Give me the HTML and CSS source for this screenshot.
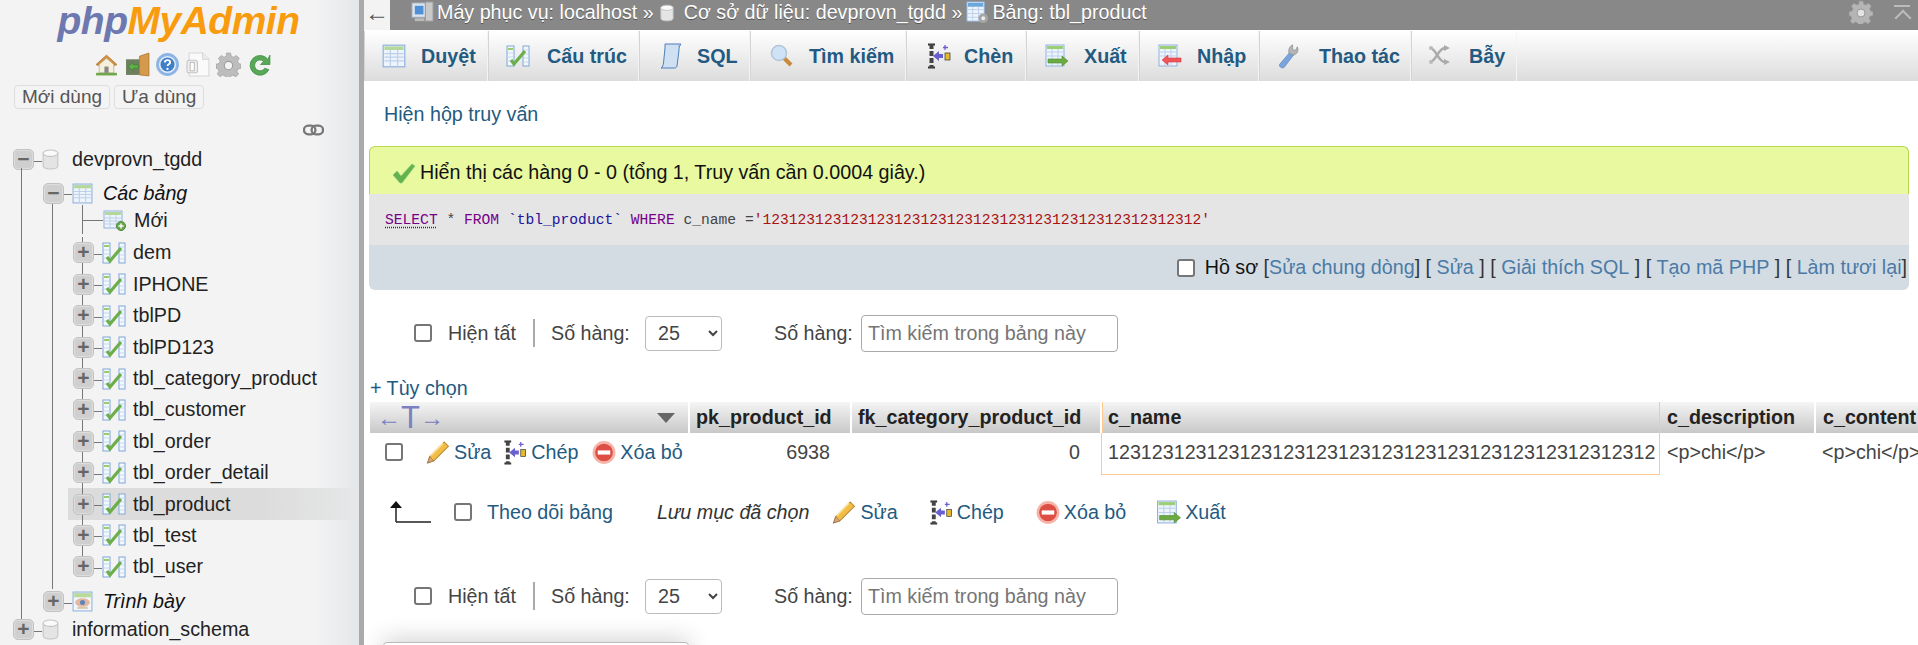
FILE: index.html
```html
<!DOCTYPE html>
<html lang="vi">
<head>
<meta charset="utf-8">
<title>phpMyAdmin</title>
<link rel="stylesheet" href="styles.css">
</head>
<body>
<svg class="defs" width="0" height="0">
  <defs>
    <symbol id="i-db" viewBox="0 0 16 20"><path d="M1 4v12c0 2 3 3 7 3s7-1 7-3V4z" fill="#e4e4e4" stroke="#c4c4c4"/><ellipse cx="8" cy="4" rx="7" ry="3" fill="#fafafa" stroke="#c4c4c4"/></symbol>
    <symbol id="i-table" viewBox="0 0 20 20"><rect x="1" y="1" width="18" height="18" fill="#eef4fb" stroke="#8fb2de"/><rect x="2" y="2" width="16" height="3" fill="#b4d89a"/><path d="M2 8h16M2 11h16M2 14h16M7 5v14M13 5v14" stroke="#bcd0ea"/></symbol>
    <symbol id="i-new" viewBox="0 0 24 22"><rect x="1" y="1" width="18" height="17" fill="#eef4fb" stroke="#8fb2de"/><rect x="2" y="2" width="16" height="3" fill="#b4d89a"/><path d="M2 8h16M2 11h16M2 14h16M7 5v13M13 5v13" stroke="#bcd0ea"/><circle cx="18" cy="16" r="4.500" fill="#6aa84f" stroke="#4d8a35"/><path d="M15.500 16h5M18 13.500v5" stroke="#fff" stroke-width="1.400"/></symbol>
    <symbol id="i-struct" viewBox="0 0 24 22"><rect x="1" y="1" width="7" height="20" fill="#f3f8fd" stroke="#7fa6da"/><rect x="17" y="1" width="6" height="20" fill="#f3f8fd" stroke="#7fa6da"/><path d="M2 4h5" stroke="#9acb6f" stroke-width="2"/><path d="M2 8h5M2 12h5M2 16h5M18 5h4M18 9h4M18 13h4M18 17h4" stroke="#c6d8ee"/><path d="M5 15l3 4L19 6" fill="none" stroke="#6cae4a" stroke-width="3.200"/></symbol>
    <symbol id="i-design" viewBox="0 0 20 20"><rect x="1" y="1" width="18" height="18" fill="#f2f6fb" stroke="#8fb2de"/><rect x="2" y="2" width="16" height="4" fill="#b9d99d"/><ellipse cx="10" cy="11" rx="7" ry="4" fill="#e4b7a0"/><circle cx="10" cy="11" r="2.400" fill="#5c84bd"/><rect x="5" y="15" width="10" height="2" fill="#d8c7a8"/></symbol>
    <symbol id="i-home" viewBox="0 0 24 24"><path d="M2 12 12 3l10 9-2 1-8-7-8 7z" fill="#d8913a" stroke="#a96a20" stroke-width=".7"/><path d="M5 12l7-6 7 6v8H5z" fill="#f5efdc" stroke="#b5a888" stroke-width=".7"/><rect x="10" y="14" width="4" height="6" fill="#888"/><rect x="2" y="20" width="20" height="2.500" fill="#6fa84a"/></symbol>
    <symbol id="i-door" viewBox="0 0 24 24"><rect x="1" y="7" width="13" height="15" fill="#6d7f5e"/><path d="M14 4l9-3v22l-9-1z" fill="#d59a4c" stroke="#a66f2b" stroke-width=".7"/><path d="M3 14l5-4v2.500h5v3H8V18z" fill="#5fb14a" stroke="#3d7e2d" stroke-width=".6"/></symbol>
    <symbol id="i-help" viewBox="0 0 24 24"><circle cx="12" cy="12" r="11" fill="#8db4e4"/><circle cx="12" cy="12" r="7.500" fill="#3f7fc8" stroke="#e5eefa" stroke-width="1.500"/><path d="M9.500 10c0-3 5-3 5 0 0 1.800-2.500 1.800-2.500 3.500" fill="none" stroke="#fff" stroke-width="1.800"/><circle cx="12" cy="16.200" r="1.100" fill="#fff"/></symbol>
    <symbol id="i-doc" viewBox="0 0 24 24"><path d="M3 1h13l6 6v16H3z" fill="#fafafa" stroke="#d6d6d6"/><path d="M16 1v6h6" fill="#eee" stroke="#d6d6d6"/><rect x="1" y="8" width="10" height="12" rx="2" fill="#efefef" stroke="#c4c4c4"/><rect x="4" y="10" width="4" height="8" fill="#fff" stroke="#bdbdbd"/></symbol>
    <symbol id="i-gear" viewBox="0 0 24 24"><path d="M10 1h4l.6 3 2.400 1 2.600-1.700 2.800 2.800L20.700 8.700l1 2.300 2.300.7v4l-2.900.5-1 2.400 1.600 2.500-2.800 2.800-2.600-1.700-2.300 1-.6 2.800h-4l-.6-2.900-2.300-1-2.600 1.700-2.800-2.800 1.700-2.500-1-2.400L0 15.700v-4l3-.7 1-2.300L2.300 6.100 5.100 3.300 7.700 5 10 4z" fill="#bdbdbd" stroke="#9c9c9c" stroke-width=".6"/><circle cx="12" cy="13" r="4" fill="#f3f3f3" stroke="#9c9c9c"/></symbol>
    <symbol id="i-reload" viewBox="0 0 24 24"><path d="M20 7A9.500 9.500 0 1 0 21 17l-4-1.500A5.200 5.200 0 1 1 16 9l-3 3h9V3z" fill="#59a857" stroke="#3b8d3e" stroke-width=".7"/></symbol>
    <symbol id="i-link" viewBox="0 0 22 12"><rect x="1" y="1.500" width="12" height="9" rx="4.500" fill="none" stroke="#777" stroke-width="2.400"/><rect x="9" y="1.500" width="12" height="9" rx="4.500" fill="none" stroke="#777" stroke-width="2.400"/></symbol>
    <symbol id="i-sql" viewBox="0 0 24 26"><path d="M6 1h16c-2 2-2 4-2 6l-2 16c-.5 2-2 2-3 2H2c2-1 2-3 2.500-5L6 5z" fill="#cfe0f3" stroke="#4f7fb8"/><path d="M19 1c2 0 3 1 3 2h-3z" fill="#8fb2de"/></symbol>
    <symbol id="i-search" viewBox="0 0 24 24"><path d="M14 14l7 7" stroke="#c98a3a" stroke-width="4"/><circle cx="9" cy="9" r="7.500" fill="#cfe3f7" stroke="#b3c5d9" stroke-width="1.500"/></symbol>
    <symbol id="i-insert" viewBox="0 0 24 26"><path d="M1 1.500h7M1 24.500h7" stroke="#333" stroke-width="2" fill="none"/><path d="M4.500 1v24" stroke="#444" stroke-width="4" stroke-dasharray="5 2"/><path d="M6 13l6-5v3h4v4h-4v3z" fill="#6a5fd0"/><rect x="18" y="10" width="5" height="7" fill="#e5b92b" stroke="#333" stroke-width=".7"/><path d="M18 2v5M16 4.500h5" stroke="#6a5fd0" stroke-width="1.300"/></symbol>
    <symbol id="i-export" viewBox="0 0 24 24"><rect x="1" y="1" width="18" height="21" fill="#eef4fb" stroke="#8fb2de"/><rect x="2" y="2" width="16" height="3" fill="#9ccf73"/><path d="M2 8h16M2 12h16M7 5v17M13 5v17" stroke="#bcd0ea"/><path d="M3 15h14v-3l6 5-6 5v-3H3z" fill="#6cab42" stroke="#4c8a2b" stroke-width=".6"/></symbol>
    <symbol id="i-import" viewBox="0 0 24 24"><rect x="1" y="1" width="18" height="21" fill="#eef4fb" stroke="#8fb2de"/><rect x="2" y="2" width="16" height="3" fill="#9ccf73"/><path d="M2 8h16M2 12h16M7 5v17M13 5v17" stroke="#bcd0ea"/><path d="M23 14H10v-3l-6 5 6 5v-3h13z" fill="#f0555a" stroke="#d63b3f" stroke-width=".6"/></symbol>
    <symbol id="i-wrench" viewBox="0 0 24 28"><path d="M14 10 3 23c-1 3 3 5 5 3l10-13z" fill="#7ba4dc" stroke="#5582bd" stroke-width=".7"/><path d="M13 11c-1-4 1-8 4-9v5l3 1 2-4c2 4 0 8-4 9z" fill="#b4b4b4" stroke="#8a8a8a" stroke-width=".7"/></symbol>
    <symbol id="i-trigger" viewBox="0 0 24 24"><path d="M2 4c6 0 8 14 15 14M2 18c6 0 8-14 15-14" fill="none" stroke="#aaa" stroke-width="2.500"/><path d="M16 1l6 3-6 3zM16 15l6 3-6 3z" fill="#aaa"/><circle cx="3" cy="4" r="2" fill="#bbb"/><circle cx="3" cy="18" r="2" fill="#bbb"/></symbol>
    <symbol id="i-pencil" viewBox="0 0 24 24"><path d="M18 2l4 4L8 20l-6 2 2-6z" fill="#f2bd45" stroke="#b8862a"/><path d="M4 16l4 4-6 2z" fill="#d9a77a" stroke="#8c6a46" stroke-width=".6"/><path d="M5 15 17 3" stroke="#fbe29a" stroke-width="1.500"/></symbol>
    <symbol id="i-del" viewBox="0 0 24 24"><circle cx="12" cy="12" r="11" fill="#f5b5aa"/><circle cx="12" cy="12" r="8.500" fill="#dd4f45"/><rect x="6" y="10" width="12" height="4" fill="#fff"/></symbol>
    <symbol id="i-check" viewBox="0 0 24 22"><path d="M1 13l4-4 4 5L20 2l3 2L10 21H8z" fill="#62b34d" stroke="#8dc97d" stroke-width=".7"/></symbol>
    <symbol id="i-server" viewBox="0 0 24 24"><rect x="1" y="2" width="14" height="15" fill="#dbe4ee" stroke="#9daab8"/><rect x="4" y="5" width="9" height="9" fill="#4f8fd6"/><rect x="15" y="1" width="8" height="20" fill="#c9c9c9" stroke="#9a9a9a"/><rect x="4" y="18" width="10" height="3" fill="#bbb"/></symbol>
    <symbol id="i-tbl2" viewBox="0 0 24 24"><rect x="1" y="1" width="18" height="20" fill="#eef4fb" stroke="#8fb2de"/><rect x="2" y="2" width="16" height="4" fill="#6ba6dc"/><path d="M2 9h16M2 13h16M2 17h16M7 6v15M13 6v15" stroke="#bcd0ea"/><circle cx="18" cy="18" r="5" fill="#a5a5a5"/><circle cx="18" cy="18" r="2" fill="#eee"/></symbol>
  </defs>
</svg>

<div class="app">
  <aside class="side">
    <div class="logo"><span class="logo-php">php</span><span class="logo-my">MyAdmin</span></div>
    <div class="quick">
      <svg class="qi"><use href="#i-home"/></svg>
      <svg class="qi"><use href="#i-door"/></svg>
      <svg class="qi"><use href="#i-help"/></svg>
      <svg class="qi"><use href="#i-doc"/></svg>
      <svg class="qi"><use href="#i-gear"/></svg>
      <svg class="qi"><use href="#i-reload"/></svg>
    </div>
    <div class="recent">
      <span class="chip">Mới dùng</span>
      <span class="chip">Ưa dùng</span>
    </div>
    <div class="linkrow"><svg class="link"><use href="#i-link"/></svg></div>
    <ul class="tree">
      <li class="row r-db r-first line-a"><span class="exp">−</span><span class="dash"></span><svg class="ic-db"><use href="#i-db"/></svg><span class="lbl-db">devprovn_tgdd</span></li>
      <li class="row r-group line-a line-b"><span class="exp">−</span><span class="dash"></span><svg class="ic-tb"><use href="#i-table"/></svg><span class="lbl-g">Các bảng</span></li>
      <li class="row r-new line-a line-b"><span class="vert"></span><span class="dash wide"></span><svg class="ic-st"><use href="#i-new"/></svg><span class="lbl-t">Mới</span></li>
      <li class="row r-t line-a line-b line-c"><span class="exp">+</span><span class="dash"></span><svg class="ic-st"><use href="#i-struct"/></svg><span class="lbl-t">dem</span></li>
      <li class="row r-t line-a line-b line-c"><span class="exp">+</span><span class="dash"></span><svg class="ic-st"><use href="#i-struct"/></svg><span class="lbl-t">IPHONE</span></li>
      <li class="row r-t line-a line-b line-c"><span class="exp">+</span><span class="dash"></span><svg class="ic-st"><use href="#i-struct"/></svg><span class="lbl-t">tblPD</span></li>
      <li class="row r-t line-a line-b line-c"><span class="exp">+</span><span class="dash"></span><svg class="ic-st"><use href="#i-struct"/></svg><span class="lbl-t">tblPD123</span></li>
      <li class="row r-t line-a line-b line-c"><span class="exp">+</span><span class="dash"></span><svg class="ic-st"><use href="#i-struct"/></svg><span class="lbl-t">tbl_category_product</span></li>
      <li class="row r-t line-a line-b line-c"><span class="exp">+</span><span class="dash"></span><svg class="ic-st"><use href="#i-struct"/></svg><span class="lbl-t">tbl_customer</span></li>
      <li class="row r-t line-a line-b line-c"><span class="exp">+</span><span class="dash"></span><svg class="ic-st"><use href="#i-struct"/></svg><span class="lbl-t">tbl_order</span></li>
      <li class="row r-t line-a line-b line-c"><span class="exp">+</span><span class="dash"></span><svg class="ic-st"><use href="#i-struct"/></svg><span class="lbl-t">tbl_order_detail</span></li>
      <li class="row r-t sel line-a line-c"><span class="exp">+</span><span class="dash"></span><svg class="ic-st"><use href="#i-struct"/></svg><span class="lbl-t">tbl_product</span></li>
      <li class="row r-t line-a line-b line-c"><span class="exp">+</span><span class="dash"></span><svg class="ic-st"><use href="#i-struct"/></svg><span class="lbl-t">tbl_test</span></li>
      <li class="row r-t line-a line-b line-c-end"><span class="exp">+</span><span class="dash"></span><svg class="ic-st"><use href="#i-struct"/></svg><span class="lbl-t">tbl_user</span></li>
      <li class="row r-group r-view line-a line-b-end"><span class="exp">+</span><span class="dash"></span><svg class="ic-tb"><use href="#i-design"/></svg><span class="lbl-g">Trình bày</span></li>
      <li class="row r-db r-last line-a-end"><span class="exp">+</span><span class="dash"></span><svg class="ic-db"><use href="#i-db"/></svg><span class="lbl-db">information_schema</span></li>
    </ul>
  </aside>
  <div class="splitter"></div>

  <main class="main">
    <div class="crumbs">
      <div class="back">←</div>
      <div class="trail">
        <svg class="ci ci-first"><use href="#i-server"/></svg><span>Máy phục vụ: localhost »</span>
        <svg class="ci ci-db"><use href="#i-db"/></svg><span>Cơ sở dữ liệu: devprovn_tgdd »</span>
        <svg class="ci ci-tb"><use href="#i-tbl2"/></svg><span>Bảng: tbl_product</span>
      </div>
      <svg class="gear"><use href="#i-gear"/></svg>
      <div class="collapse"></div>
    </div>

    <nav class="tabs">
      <a class="tab t1"><svg class="ti"><use href="#i-table"/></svg>Duyệt</a>
      <a class="tab t2"><svg class="ti"><use href="#i-struct"/></svg>Cấu trúc</a>
      <a class="tab t3"><svg class="ti"><use href="#i-sql"/></svg>SQL</a>
      <a class="tab t4"><svg class="ti"><use href="#i-search"/></svg>Tìm kiếm</a>
      <a class="tab t5"><svg class="ti"><use href="#i-insert"/></svg>Chèn</a>
      <a class="tab t6"><svg class="ti"><use href="#i-export"/></svg>Xuất</a>
      <a class="tab t7"><svg class="ti"><use href="#i-import"/></svg>Nhập</a>
      <a class="tab t8"><svg class="ti"><use href="#i-wrench"/></svg>Thao tác</a>
      <a class="tab t9"><svg class="ti"><use href="#i-trigger"/></svg>Bẫy</a>
    </nav>

    <div class="qbox-link">Hiện hộp truy vấn</div>

    <section class="result">
      <div class="msg"><svg class="ok"><use href="#i-check"/></svg>Hiển thị các hàng 0 - 0 (tổng 1, Truy vấn cần 0.0004 giây.)</div>
      <div class="sql"><code class="sql-line"><span class="kw-u">SELECT</span> <span class="op">*</span> <span class="kw">FROM</span> <span class="tick">`tbl_product`</span> <span class="kw">WHERE</span> <span class="col">c_name</span> <span class="op">=</span><span class="str">'12312312312312312312312312312312312312312312312312'</span></code></div>
      <div class="tools"><input type="checkbox" class="cb"><span class="prof">Hồ sơ</span> [<a>Sửa chung dòng</a>] [ <a>Sửa</a> ] [ <a>Giải thích SQL</a> ] [ <a>Tạo mã PHP</a> ] [ <a>Làm tươi lại</a>]</div>
    </section>

    <div class="filters f-top">
      <input type="checkbox" class="cb">
      <span class="f-all">Hiện tất</span>
      <span class="f-sep"></span>
      <span class="f-rows">Số hàng:</span>
      <select class="sel-rows"><option>25</option></select>
      <span class="f-rows2">Số hàng:</span>
      <input class="f-search" type="text" placeholder="Tìm kiếm trong bảng này">
    </div>

    <div class="opts">+ Tùy chọn</div>

    <table class="grid">
      <colgroup><col class="c1"><col class="c2"><col class="c3"><col class="c4"><col class="c5"><col class="c6"></colgroup>
      <thead>
        <tr>
          <th class="th-act"><span class="tarrows"><span class="ta">←</span><span class="tt">T</span><span class="ta">→</span></span><span class="tri"></span></th>
          <th class="th-l">pk_product_id</th>
          <th class="th-l">fk_category_product_id</th>
          <th class="th-l mark mark-h">c_name</th>
          <th>c_description</th>
          <th>c_content</th>
        </tr>
      </thead>
      <tbody>
        <tr>
          <td class="td-act">
            <div class="acts">
              <input type="checkbox" class="cb cb-row">
              <a class="act a-edit"><svg class="ai"><use href="#i-pencil"/></svg>Sửa</a>
              <a class="act a-copy"><svg class="ai"><use href="#i-insert"/></svg>Chép</a>
              <a class="act"><svg class="ai"><use href="#i-del"/></svg>Xóa bỏ</a>
            </div>
          </td>
          <td class="num">6938</td>
          <td class="num">0</td>
          <td class="mark mark-d">12312312312312312312312312312312312312312312312312</td>
          <td>&lt;p&gt;chi&lt;/p&gt;</td>
          <td>&lt;p&gt;chi&lt;/p&gt;</td>
        </tr>
      </tbody>
    </table>

    <div class="bulk">
      <svg class="up" viewBox="0 0 44 24"><path d="M8 22h35M8 22V6" stroke="#222" stroke-width="1.500" fill="none"/><path d="M2 8 8 1l6 7z" fill="#111"/></svg>
      <input type="checkbox" class="cb">
      <a class="b-all">Theo dõi bảng</a>
      <em class="b-save">Lưu mục đã chọn</em>
      <a class="b-act b-edit"><svg class="ai"><use href="#i-pencil"/></svg>Sửa</a>
      <a class="b-act b-copy"><svg class="ai"><use href="#i-insert"/></svg>Chép</a>
      <a class="b-act b-del"><svg class="ai"><use href="#i-del"/></svg>Xóa bỏ</a>
      <a class="b-act b-exp"><svg class="ai"><use href="#i-export"/></svg>Xuất</a>
    </div>

    <div class="filters f-bot">
      <input type="checkbox" class="cb">
      <span class="f-all">Hiện tất</span>
      <span class="f-sep"></span>
      <span class="f-rows">Số hàng:</span>
      <select class="sel-rows"><option>25</option></select>
      <span class="f-rows2">Số hàng:</span>
      <input class="f-search" type="text" placeholder="Tìm kiếm trong bảng này">
    </div>

    <div class="qbox-peek"></div>
  </main>
</div>
</body>
</html>
```
FILE: styles.css
```css
* { box-sizing: border-box; }
html, body { margin: 0; padding: 0; height: 645px; overflow: hidden; background: #fff; }
body { font-family: "Liberation Sans", Arial, sans-serif; font-size: 19.700px; color: #444; }
.defs { position: absolute; }
a { color: #235a81; text-decoration: none; }
ul { list-style: none; margin: 0; padding: 0; }

.app { display: flex; width: 1918px; height: 645px; overflow: hidden; }

/* navigation panel */
.side { width: 359px; flex: none; height: 645px; overflow: hidden; background: linear-gradient(to right, #f3f3f3 0, #f3f3f3 315px, #e4e7ea 359px); }
.splitter { width: 5px; flex: none; background: #aaa; }
.logo { height: 47px; text-align: center; font-weight: bold; font-style: italic; font-size: 39px; line-height: 42px; letter-spacing: -.5px; padding-right: 2px; }
.logo-php { color: #6c78af; }
.logo-my { color: #f89c0e; }
.quick { display: flex; height: 28px; margin-top: 5px; padding-left: 94px; gap: 5.500px; }
.qi { width: 25px; height: 25px; flex: none; }
.recent { display: flex; gap: 4px; padding-left: 14px; margin-top: 5px; }
.chip { height: 24px; line-height: 22px; padding: 0 7px; font-size: 19px; border: 1px solid #ddd; border-radius: 4px; color: #555; background: #f4f4f4; }
.linkrow { height: 18px; margin-top: 15px; padding-left: 303px; }
.link { width: 21px; height: 12px; display: block; }

.tree { margin-top: 2.300px; }
.row { position: relative; display: flex; align-items: center; height: 31.400px; color: #222; white-space: nowrap; }
.exp { flex: none; width: 21px; height: 21px; border-radius: 5px; background: #cfcfcf; border: 1px solid #c2c2c2; box-shadow: inset 0 0 0 1px #ddd; color: #666; font-weight: bold; font-size: 21px; line-height: 18px; text-align: center; position: relative; z-index: 1; }
.dash { flex: none; width: 8px; height: 1px; background: #777; margin-top: 3px; position: relative; z-index: 1; }
.dash.wide { width: 20px; margin-top: 0; }
.vert { flex: none; width: 1px; }
.ic-db { width: 17px; height: 21px; flex: none; }
.ic-tb { width: 21px; height: 21px; flex: none; }
.ic-st { width: 24px; height: 22px; flex: none; }
.lbl-db { margin-left: 13px; }
.lbl-g { margin-left: 10px; font-style: italic; color: #111; }
.lbl-t { margin-left: 7px; }

.r-db { padding-left: 13px; }
.r-group { padding-left: 43px; height: 33.600px; padding-top: 2px; }
.r-t { padding-left: 73px; }
.r-new { padding-left: 82px; height: 28px; padding-bottom: 4.600px; }
.r-view { height: 32px; padding-top: 6px; }
.r-last { height: 30.600px; }

.line-a::before, .line-a-end::before { content: ""; position: absolute; left: 21px; top: 0; bottom: 0; width: 1px; background: #777; z-index: 2; }
.line-a-end::before { bottom: auto; height: 4px; }
.r-first.line-a::before { top: 24px; }
.line-b { background-image: linear-gradient(#777, #777); background-repeat: no-repeat; background-size: 1px 100%; background-position: 52px 0; }
.r-group.line-b { background-size: 1px 10px; background-position: 52px 100%; }
.line-b-end { background-image: linear-gradient(#777, #777); background-repeat: no-repeat; background-size: 1px 6px; background-position: 52px 0; }
.line-c::after, .line-c-end::after { content: ""; position: absolute; left: 82px; top: 0; bottom: 0; width: 1px; background: #777; z-index: 0; }
.line-c-end::after { bottom: 10px; }
.r-new::after { content: ""; position: absolute; left: 82px; top: -4px; bottom: 3px; width: 1px; background: #777; }
.sel { background-image: linear-gradient(#777, #777), linear-gradient(to right, #f3f3f3 68px, #dcdcdc 68px, #dcdcdc 260px, #e6e7e8 100%); background-size: 1px 100%, 100% 100%; background-position: 52px 0, 0 0; background-repeat: no-repeat; }

/* main column */
.main { flex: 1; min-width: 0; height: 645px; overflow: hidden; position: relative; }
.crumbs { display: flex; align-items: center; height: 30px; background: #888; color: #fff; text-shadow: 0 1px 0 #555; }
.back { width: 26px; height: 30px; background: #f3f3f3; color: #555; text-align: center; font-size: 24px; line-height: 26px; text-shadow: none; flex: none; }
.trail { display: flex; align-items: center; gap: 6px; padding-left: 21px; flex: 1; height: 26px; margin-top: -5px; white-space: nowrap; }
.ci { width: 23px; height: 23px; flex: none; }
.ci-first { margin-right: -3px; }
.ci-db { width: 14px; height: 20px; margin-right: 4px; }
.ci-tb { margin-right: -3px; margin-left: -2px; }
.gear { width: 24px; height: 24px; flex: none; margin-right: 21px; margin-top: -6px; opacity: .85; }
.collapse { width: 16px; height: 16px; flex: none; margin-right: 8px; margin-top: -4px; border-top: 2px solid #bbb; position: relative; }
.collapse::after { content: ""; position: absolute; left: 3px; top: 5px; width: 10px; height: 10px; border-left: 2px solid #bbb; border-top: 2px solid #bbb; transform: rotate(45deg); }

.tabs { display: flex; height: 50px; margin-top: 1px; background: linear-gradient(#fff, #dcdcdc); }
.tab { display: flex; align-items: center; height: 50px; color: #235a81; font-weight: bold; border-right: 1px solid #f4f4f4; box-shadow: 1px 0 0 #d4d4d4 inset; flex: none; white-space: nowrap; }
.ti { width: 24px; height: 26px; flex: none; }
.t1 { width: 124px; padding-left: 18px; gap: 15px; }
.t2 { width: 151px; padding-left: 18px; gap: 17px; }
.t3 { width: 111px; padding-left: 20px; gap: 14px; }
.t4 { width: 156px; padding-left: 20px; gap: 15px; }
.t5 { width: 120px; padding-left: 21px; gap: 13px; }
.t6 { width: 113px; padding-left: 19px; gap: 15px; }
.t7 { width: 120px; padding-left: 19px; gap: 15px; }
.t8 { width: 152px; padding-left: 17px; gap: 19px; }
.t9 { width: 106px; padding-left: 17px; gap: 17px; }

.qbox-link { margin: 21px 0 0 20px; color: #235a81; height: 24px; line-height: 24px; }

.result { margin: 20px 9px 0 5px; }
.msg { display: flex; align-items: center; height: 48px; padding: 4px 0 0 22px; background: #e8f9a0; border: 1px solid #b5d84e; border-bottom: 0; border-radius: 6px 6px 0 0; color: #111; gap: 4px; }
.ok { width: 24px; height: 22px; flex: none; }
.sql { height: 51px; padding: 0 0 0 16px; display: flex; align-items: center; background: #e5e5e5; color: #444; }
.sql-line { white-space: pre; font-family: "Liberation Mono", monospace; font-size: 14.630px; }
.kw-u { color: #708; text-decoration: underline dotted #333; text-underline-offset: 3px; }
.kw { color: #708; }
.tick { color: #219; }
.op { color: #444; }
.col { color: #444; }
.str { color: #a11; }
.tools { height: 45px; display: flex; align-items: center; justify-content: flex-end; background: #d3dce3; border-radius: 0 0 6px 6px; color: #333; white-space: pre; padding-right: 2px; }
.tools a { color: #4b7aa6; }
.prof { color: #111; margin-left: 10px; }

.filters { display: flex; align-items: center; height: 36px; padding-left: 50px; color: #444; }
.f-top { margin-top: 25px; }
.f-bot { margin-top: 51px; }
.cb { width: 18px; height: 18px; margin: 0; flex: none; appearance: none; background: #fff; border: 2px solid #767676; border-radius: 3px; }
.f-all { margin-left: 16px; width: 67px; white-space: nowrap; }
.f-sep { width: 2px; height: 28px; background: #aaa; margin-left: 18px; }
.f-rows { margin-left: 16px; width: 78px; white-space: nowrap; }
.sel-rows { width: 77px; height: 35px; margin-left: 16px; padding-left: 8px; font: 19.700px "Liberation Sans", Arial, sans-serif; color: #444; background: #fff; border: 1px solid #bbb; border-radius: 4px; }
.f-rows2 { margin-left: 52px; width: 78px; white-space: nowrap; }
.f-search { width: 257px; height: 37px; margin-left: 9px; padding: 0 6px; font: 19.700px "Liberation Sans", Arial, sans-serif; color: #666; border: 1px solid #aaa; border-radius: 4px; }
.f-search::placeholder { color: #757575; opacity: 1; }

.opts { margin: 27px 0 0 6px; height: 20px; line-height: 20px; color: #235a81; }

.grid { border-collapse: collapse; table-layout: fixed; width: 1554px; margin: 4px 0 0 6px; }
.c1 { width: 319px; } .c2 { width: 162px; } .c3 { width: 250px; } .c4 { width: 559px; } .c5 { width: 155px; } .c6 { width: 109px; }
.grid th { height: 31px; padding: 0 7px; text-align: left; white-space: nowrap; overflow: hidden; color: #222; background: linear-gradient(#f5f5f5, #c8c8c8); border-right: 2px solid #fff; }
.grid th.th-l { padding-left: 6px; }
.grid td { height: 42px; padding: 0 7px 4px; white-space: nowrap; overflow: hidden; color: #444; }
.grid td.num { text-align: right; padding-right: 21px; }
.grid th.th-act { position: relative; padding: 0; }
.tarrows { display: inline-flex; align-items: center; height: 31px; color: #7a80c0; font-weight: normal; padding-left: 7px; }
.ta { font-size: 24px; line-height: 28px; }
.tt { font-size: 31px; line-height: 31px; }
.tri { position: absolute; right: 13px; top: 11px; width: 0; height: 0; border-left: 9px solid transparent; border-right: 9px solid transparent; border-top: 10px solid #666; }
.mark-h { box-shadow: inset 1px 0 0 #fdc991, inset -1px 0 0 #fdc991, 0 -1px 0 #f4f6f8, 0 -2px 0 #fdc991; }
.mark-d { box-shadow: inset 1px 0 0 #fdc991, inset -1px 0 0 #fdc991, inset 0 -1px 0 #fdc991; }
.grid th.mark { border-right: 0; }
.acts { display: flex; align-items: center; padding-left: 8px; }
.cb-row { margin-right: 22px; }
.act { display: inline-flex; align-items: center; gap: 3px; color: #235a81; }
.a-edit { margin-right: 11px; }
.a-copy { margin-right: 13px; }
.ai { width: 26px; height: 25px; flex: none; }

.bulk { display: flex; align-items: center; height: 30px; margin-top: 22px; padding-left: 24px; white-space: nowrap; color: #235a81; }
.up { width: 44px; height: 24px; flex: none; }
.bulk .cb { margin-left: 22px; }
.b-all { margin-left: 15px; }
.b-save { margin-left: 44px; color: #333; }
.b-act { display: inline-flex; align-items: center; gap: 3px; }
.b-edit { margin-left: 22px; }
.b-copy { margin-left: 30px; }
.b-del { margin-left: 31px; }
.b-exp { margin-left: 30px; }

.qbox-peek { position: absolute; left: 19px; top: 642px; width: 306px; height: 40px; background: #fff; border: 1px solid #bbb; border-radius: 4px; box-shadow: 0 -3px 24px rgba(0,0,0,.18); }
```
